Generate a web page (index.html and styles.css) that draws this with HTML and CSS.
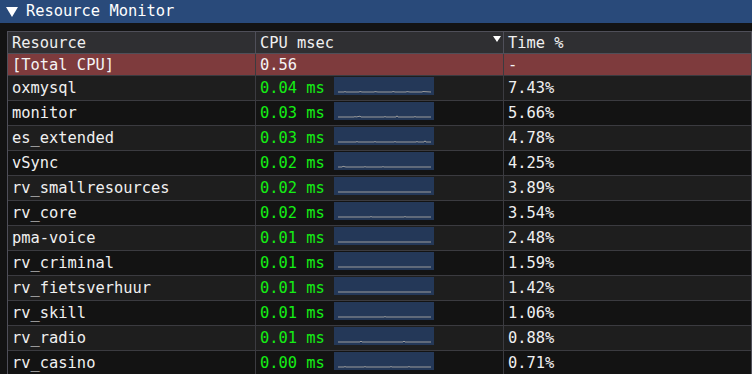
FILE: index.html
```html
<!DOCTYPE html>
<html>
<head>
<meta charset="utf-8">
<link rel="stylesheet" href="styles.css">
</head>
<body>
<div class="window">
  <div class="titlebar">
    <svg class="collapse" width="12" height="10" viewBox="0 0 12 10"><polygon points="0,0 12,0 6,10" fill="#ffffff"/></svg>
    <span class="title">Resource Monitor</span>
  </div>
  <div class="table">
    <div class="row header">
      <div class="cell">Resource</div>
      <div class="cell sortcell"><span>CPU msec</span><svg class="sort" width="8" height="6" viewBox="0 0 8 6"><polygon points="0,0 8,0 4,6" fill="#ffffff"/></svg></div>
      <div class="cell">Time %</div>
    </div>
    <div class="row total">
      <div class="cell">[Total CPU]</div>
      <div class="cell">0.56</div>
      <div class="cell">-</div>
    </div>

    <div class="row data alt">
      <div class="cell">oxmysql</div>
      <div class="cell"><span class="ms">0.04 ms</span><svg class="plot" width="100" height="18" viewBox="0 0 100 18"><polyline points="4,15 10,15 11,14.5 12,15 25,15 26,14.5 28,15 40,15 41,14.6 44,15 58,15 59,14.5 61,15 72,15 73,14.6 76,15 88,15 89,14.5 97,15"/></svg></div>
      <div class="cell">7.43%</div>
    </div>
    <div class="row data">
      <div class="cell">monitor</div>
      <div class="cell"><span class="ms">0.03 ms</span><svg class="plot" width="100" height="18" viewBox="0 0 100 18"><polyline points="4,15 20,15 21,14.5 22,15 26,14.2 27,15 50,15 51,14.5 52,15 62,15 63,13.8 64,15 80,15 81,14.5 82,15 97,15"/></svg></div>
      <div class="cell">5.66%</div>
    </div>
    <div class="row data alt">
      <div class="cell">es_extended</div>
      <div class="cell"><span class="ms">0.03 ms</span><svg class="plot" width="100" height="18" viewBox="0 0 100 18"><polyline points="4,15 22,15 23,14.5 24,15 40,15 41,14.5 42,15 60,15 61,14.5 62,15 82,15 83,14.5 84,15 90,15 91,13.8 92,15 97,15"/></svg></div>
      <div class="cell">4.78%</div>
    </div>
    <div class="row data">
      <div class="cell">vSync</div>
      <div class="cell"><span class="ms">0.02 ms</span><svg class="plot" width="100" height="18" viewBox="0 0 100 18"><polyline points="4,15 8,15 9,14.3 12,15 30,15 31,14.6 32,15 48,15 49,14.6 50,15 97,15"/></svg></div>
      <div class="cell">4.25%</div>
    </div>
    <div class="row data alt">
      <div class="cell">rv_smallresources</div>
      <div class="cell"><span class="ms">0.02 ms</span><svg class="plot" width="100" height="18" viewBox="0 0 100 18"><polyline points="4,15 97,15"/></svg></div>
      <div class="cell">3.89%</div>
    </div>
    <div class="row data">
      <div class="cell">rv_core</div>
      <div class="cell"><span class="ms">0.02 ms</span><svg class="plot" width="100" height="18" viewBox="0 0 100 18"><polyline points="4,15 36,15 37,14.5 38,15 70,15 71,14.5 72,15 97,15"/></svg></div>
      <div class="cell">3.54%</div>
    </div>
    <div class="row data alt">
      <div class="cell">pma-voice</div>
      <div class="cell"><span class="ms">0.01 ms</span><svg class="plot" width="100" height="18" viewBox="0 0 100 18"><polyline points="4,15 97,15"/></svg></div>
      <div class="cell">2.48%</div>
    </div>
    <div class="row data">
      <div class="cell">rv_criminal</div>
      <div class="cell"><span class="ms">0.01 ms</span><svg class="plot" width="100" height="18" viewBox="0 0 100 18"><polyline points="4,15 97,15"/></svg></div>
      <div class="cell">1.59%</div>
    </div>
    <div class="row data alt">
      <div class="cell">rv_fietsverhuur</div>
      <div class="cell"><span class="ms">0.01 ms</span><svg class="plot" width="100" height="18" viewBox="0 0 100 18"><polyline points="4,15 97,15"/></svg></div>
      <div class="cell">1.42%</div>
    </div>
    <div class="row data">
      <div class="cell">rv_skill</div>
      <div class="cell"><span class="ms">0.01 ms</span><svg class="plot" width="100" height="18" viewBox="0 0 100 18"><polyline points="4,15 50,15 51,14.5 52,15 97,15"/></svg></div>
      <div class="cell">1.06%</div>
    </div>
    <div class="row data alt">
      <div class="cell">rv_radio</div>
      <div class="cell"><span class="ms">0.01 ms</span><svg class="plot" width="100" height="18" viewBox="0 0 100 18"><polyline points="4,15 26,15 27,14 28,15 69,15 70,14 71,15 97,15"/></svg></div>
      <div class="cell">0.88%</div>
    </div>
    <div class="row data">
      <div class="cell">rv_casino</div>
      <div class="cell"><span class="ms">0.00 ms</span><svg class="plot" width="100" height="18" viewBox="0 0 100 18"><polyline points="4,15 10,15 11,14.5 12,15 30,15 31,14.5 32,15 56,15 57,14.5 58,15 74,15 75,14.5 76,15 97,15"/></svg></div>
      <div class="cell">0.71%</div>
    </div>
  </div>
</div>
</body>
</html>
```
FILE: styles.css
```css
html, body {
  margin: 0;
  padding: 0;
  width: 752px;
  height: 374px;
  overflow: hidden;
  background: #131313;
}

.window {
  font-family: "DejaVu Sans Mono", "Liberation Mono", monospace;
  font-size: 15.4px;
  color: #f0f0f0;
}

.titlebar {
  height: 23px;
  background: #294a7a;
  display: flex;
  align-items: center;
  box-sizing: border-box;
  padding-left: 6px;
}

.collapse {
  display: block;
  flex: none;
  margin-top: 1px;
}

.title {
  margin-left: 8px;
  line-height: 23px;
  color: #ffffff;
}

.table {
  margin: 8px 0 0 7px;
  width: 745px;
  box-sizing: border-box;
  border-top: 1px solid #4f4f59;
  border-left: 1px solid #4f4f59;
  border-right: 1px solid #4f4f59;
}

.row {
  display: grid;
  grid-template-columns: 247px 248px 248px;
  box-sizing: border-box;
  border-bottom: 1px solid #3b3b40;
}

.cell {
  box-sizing: border-box;
  padding-left: 4px;
  display: flex;
  align-items: center;
  white-space: nowrap;
  overflow: hidden;
}

.cell + .cell {
  border-left: 1px solid #3b3b40;
}

.header {
  height: 22px;
  background: #2f2f32;
  border-bottom-color: #4f4f59;
}

.header .cell + .cell {
  border-left-color: #4f4f59;
}

.sortcell {
  justify-content: space-between;
  padding-right: 2px;
}

.sort {
  display: block;
  align-self: flex-start;
  margin-top: 4px;
}

.total {
  height: 22px;
  background: #7e3b3d;
  border-bottom-color: #3b3b40;
}

.total .cell {
  color: #f4f4f4;
}

.data {
  height: 25px;
}

.data.alt {
  background: #1e1e1e;
}

.ms {
  color: #14ee14;
  width: 74px;
  flex: none;
}

.plot {
  display: block;
  flex: none;
  align-self: flex-start;
  margin-top: 1px;
  background: #243858;
}

.plot polyline {
  fill: none;
  stroke: #9c9c9c;
  stroke-width: 1;
}
```
